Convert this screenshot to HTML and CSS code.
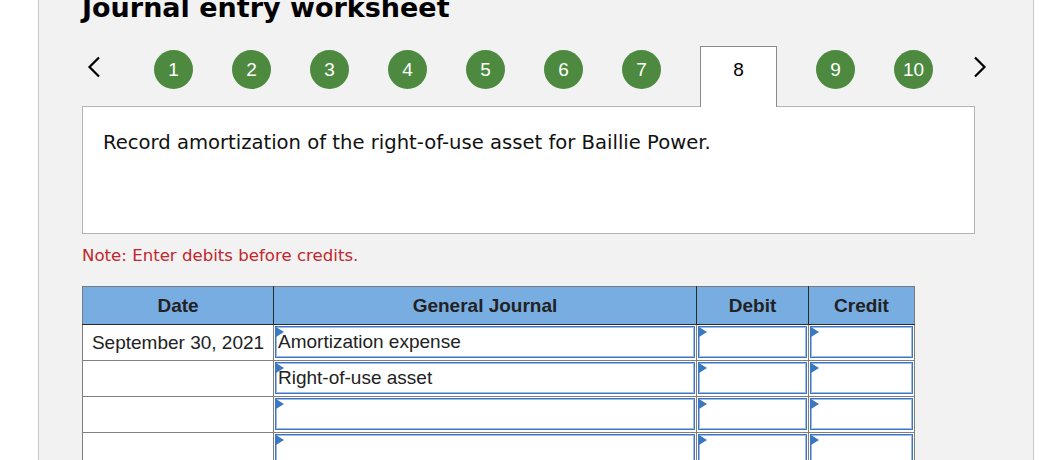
FILE: index.html
```html
<!DOCTYPE html>
<html lang="en">
<head>
<meta charset="utf-8">
<title>Journal entry worksheet</title>
<link rel="stylesheet" href="styles.css">
</head>
<body>
<div class="panel">
  <h1 class="title">Journal entry worksheet</h1>
  <nav class="steps">
    <span class="chev prev"><svg width="14" height="22" viewBox="0 0 14 22"><polyline points="12,1.5 2.5,11 12,20.5" fill="none" stroke="#000" stroke-width="2.2"/></svg></span>
    <span class="step done">1</span>
    <span class="step done">2</span>
    <span class="step done">3</span>
    <span class="step done">4</span>
    <span class="step done">5</span>
    <span class="step done">6</span>
    <span class="step done">7</span>
    <span class="step current">8</span>
    <span class="step done">9</span>
    <span class="step done">10</span>
    <span class="chev next"><svg width="14" height="22" viewBox="0 0 14 22"><polyline points="2,1.5 11.5,11 2,20.5" fill="none" stroke="#000" stroke-width="2.2"/></svg></span>
  </nav>
  <div class="prompt">
    <p>Record amortization of the right-of-use asset for Baillie Power.</p>
  </div>
  <p class="note">Note: Enter debits before credits.</p>
  <table class="journal">
    <colgroup>
      <col class="c-date">
      <col class="c-gj">
      <col class="c-dr">
      <col class="c-cr">
    </colgroup>
    <thead>
      <tr><th>Date</th><th>General Journal</th><th>Debit</th><th>Credit</th></tr>
    </thead>
    <tbody>
      <tr>
        <td class="date">September 30, 2021</td>
        <td><div class="field">Amortization expense</div></td>
        <td><div class="field"></div></td>
        <td><div class="field"></div></td>
      </tr>
      <tr>
        <td class="date"></td>
        <td><div class="field">Right-of-use asset</div></td>
        <td><div class="field"></div></td>
        <td><div class="field"></div></td>
      </tr>
      <tr>
        <td class="date"></td>
        <td><div class="field"></div></td>
        <td><div class="field"></div></td>
        <td><div class="field"></div></td>
      </tr>
      <tr>
        <td class="date"></td>
        <td><div class="field"></div></td>
        <td><div class="field"></div></td>
        <td><div class="field"></div></td>
      </tr>
      <tr>
        <td class="date"></td>
        <td><div class="field"></div></td>
        <td><div class="field"></div></td>
        <td><div class="field"></div></td>
      </tr>
    </tbody>
  </table>
</div>
</body>
</html>
```

FILE: styles.css
```css
html, body {
  margin: 0;
  padding: 0;
  height: 460px;
  overflow: hidden;
  background: #ffffff;
}

.panel {
  margin-left: 38px;
  width: 951px;
  min-height: 600px;
  padding-left: 43px;
  border-left: 1px solid #c6c6c6;
  border-right: 1px solid #c6c6c6;
  background: #f2f2f2;
  font-family: "DejaVu Sans", Verdana, sans-serif;
}

.title {
  margin: -8px 0 0 0;
  font-size: 27px;
  line-height: 32px;
  font-weight: bold;
  color: #000;
}

.steps {
  display: flex;
  align-items: flex-start;
  gap: 39px;
  margin: 22px 0 0 5px;
  height: 60px;
}

.chev {
  display: flex;
  width: 28px;
  margin-top: 10px;
}

.next {
  padding-left: 1px;
}

.step {
  flex: none;
  width: 39px;
  height: 39px;
  margin-top: 4px;
  border-radius: 50%;
  text-align: center;
  line-height: 39px;
  font-family: "Liberation Sans", Arial, sans-serif;
  font-size: 19px;
}

.step.done {
  background: #4d8a3f;
  color: #ffffff;
}

.step.current {
  width: 75px;
  height: 57px;
  margin-top: 0;
  padding-top: 3px;
  border: 1px solid #8a8a8a;
  border-bottom: none;
  border-radius: 0;
  background: #ffffff;
  color: #000;
  line-height: 39px;
  position: relative;
  z-index: 1;
}

.prompt {
  width: 891px;
  height: 126px;
  border: 1px solid #b4b4b4;
  background: #ffffff;
}

.prompt p {
  margin: 24px 0 0 20px;
  font-size: 19.6px;
  line-height: 23px;
  color: #111;
}

.note {
  margin: 12px 0 0 0;
  font-size: 16.6px;
  line-height: 20px;
  color: #c1272d;
}

.journal {
  margin-top: 20px;
  border-collapse: collapse;
  table-layout: fixed;
  width: 832px;
  border: 1px solid #7a7a7a;
  font-family: "Liberation Sans", Arial, sans-serif;
  font-size: 19px;
  color: #222;
}

.c-date { width: 191px; }
.c-gj { width: 423px; }
.c-dr { width: 112px; }
.c-cr { width: 106px; }

.journal th {
  height: 37px;
  padding: 0;
  background: #78ade2;
  border-left: 1px solid #2a2a2a;
  border-bottom: 1px solid #2a2a2a;
  font-weight: bold;
  text-align: center;
  vertical-align: middle;
}

.journal th:first-child {
  border-left: 1px solid #7a7a7a;
}

.journal td {
  height: 33px;
  padding: 1px;
  background: #ffffff;
  border: 1px solid #808080;
  vertical-align: top;
}

.journal td.date {
  text-align: center;
  vertical-align: middle;
  padding: 0;
  white-space: nowrap;
}

.field {
  position: relative;
  box-sizing: border-box;
  height: 32px;
  padding-left: 2px;
  border: 1px solid #3f75bf;
  box-shadow: inset 0 0 0 1px #9bbce8;
  line-height: 30px;
  white-space: nowrap;
  overflow: hidden;
}

.field::before {
  content: "";
  position: absolute;
  left: 0;
  top: 0;
  width: 0;
  height: 0;
  border-left: 8px solid #3a78c4;
  border-top: 5px solid transparent;
  border-bottom: 5px solid transparent;
}
```
